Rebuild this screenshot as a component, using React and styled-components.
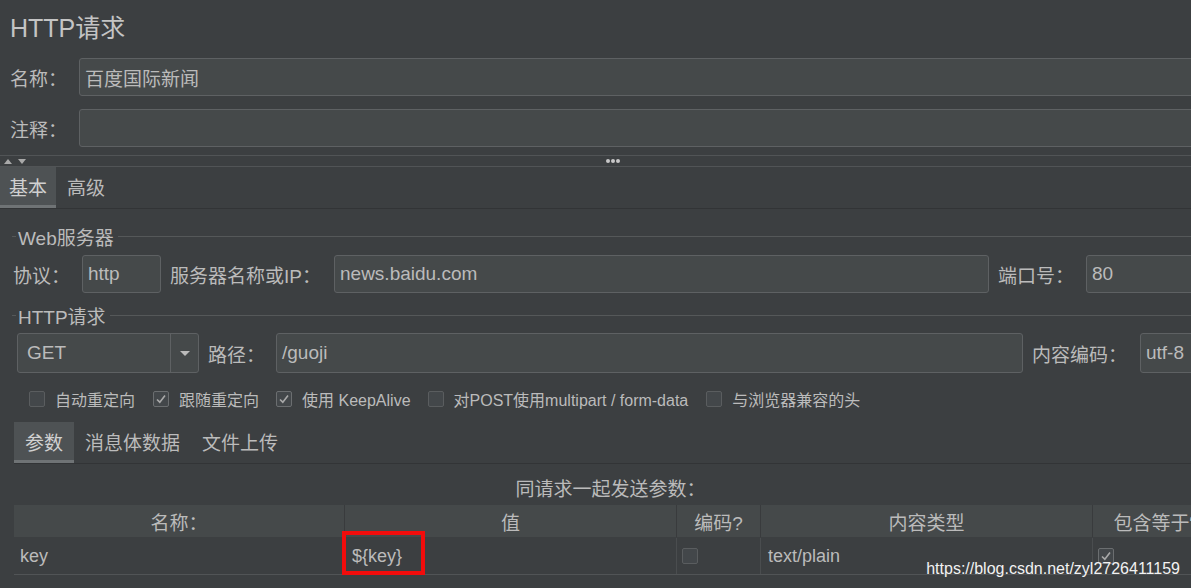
import React from "react";
import styled, { createGlobalStyle } from "styled-components";

const Global = createGlobalStyle`
  html, body {
    margin: 0;
    padding: 0;
    background: #3c3f41;
  }
  * {
    box-sizing: border-box;
  }
`;

const FONT = `"Liberation Sans", "Noto Sans CJK SC", sans-serif`;

const Page = styled.div`
  position: relative;
  width: 1191px;
  height: 588px;
  overflow: hidden;
  background: #3c3f41;
  color: #bbbbbb;
  font-family: ${FONT};
  font-size: 19px;
`;

const Top = styled.div`
  padding-left: 10px;
`;

const Title = styled.div`
  height: 56px;
  line-height: 56px;
  font-size: 25px;
  color: #c4c4c4;
`;

const FieldRow = styled.div`
  display: flex;
  align-items: center;
  margin-top: ${(p) => p.$top || 0}px;
`;

const Label = styled.div`
  flex: none;
  width: ${(p) => p.$w}px;
  white-space: nowrap;
  font-size: 19px;
  padding-left: ${(p) => p.$pl || 0}px;
`;

const Input = styled.div`
  flex: ${(p) => (p.$w ? "none" : "1")};
  width: ${(p) => (p.$w ? `${p.$w}px` : "auto")};
  height: ${(p) => p.$h || 38}px;
  margin-right: ${(p) => (p.$w ? "9px" : "-20px")};
  background: #45494a;
  border: 1px solid #5e6163;
  border-radius: 3px;
  display: flex;
  align-items: center;
  padding-left: 5px;
  font-size: 19px;
  color: #bbbbbb;
  white-space: nowrap;
`;

const Splitter = styled.div`
  position: relative;
  margin-top: 8px;
  height: 12px;
  border-top: 1px solid #515456;
  border-bottom: 1px solid #515456;
  display: flex;
  align-items: center;
  padding-left: 4px;
  gap: 6px;
`;

const Arrow = styled.div`
  width: 0;
  height: 0;
  border-left: 4px solid transparent;
  border-right: 4px solid transparent;
  ${(p) =>
    p.$up
      ? "border-bottom: 5px solid #a9a9a9;"
      : "border-top: 5px solid #a9a9a9;"}
`;

const Dots = styled.div`
  position: absolute;
  left: 606px;
  top: 3px;
  display: flex;
  gap: 1px;
  span {
    width: 4px;
    height: 4px;
    border-radius: 50%;
    background: #c8c8c8;
  }
`;

const TabBar = styled.div`
  display: flex;
  height: 42px;
  border-bottom: 1px solid #323436;
  margin-left: ${(p) => p.$left || 0}px;
  margin-top: ${(p) => p.$top || 0}px;
`;

const Tab = styled.div`
  display: flex;
  align-items: center;
  padding: 0 ${(p) => p.$pad || 10}px;
  font-size: 19px;
  color: ${(p) => (p.$active ? "#d0d0d0" : "#bbbbbb")};
  background: ${(p) => (p.$active ? "#4e5254" : "transparent")};
  border-bottom: 3px solid ${(p) => (p.$active ? "#6f7375" : "transparent")};
`;

const Content = styled.div`
  padding-left: 12px;
`;

const GroupTitle = styled.div`
  display: flex;
  align-items: center;
  height: 24px;
  margin-top: ${(p) => p.$top}px;
  margin-bottom: ${(p) => p.$bottom}px;
  &::before {
    content: "";
    width: 4px;
    border-top: 1px solid #555859;
    margin-right: 2px;
  }
  &::after {
    content: "";
    flex: 1;
    border-top: 1px solid #555859;
    margin-left: 4px;
  }
`;

const Combo = styled.div`
  flex: none;
  width: 182px;
  height: 40px;
  margin-left: 5px;
  margin-right: 9px;
  display: flex;
  background: #45494a;
  border: 1px solid #5e6163;
  border-radius: 3px;
`;

const ComboValue = styled.div`
  flex: 1;
  display: flex;
  align-items: center;
  padding-left: 9px;
  font-size: 19px;
  border-right: 1px solid #5e6163;
`;

const ComboButton = styled.div`
  width: 27px;
  display: flex;
  align-items: center;
  justify-content: center;
  &::after {
    content: "";
    border-left: 5px solid transparent;
    border-right: 5px solid transparent;
    border-top: 5px solid #bbbbbb;
  }
`;

const CheckRow = styled.div`
  display: flex;
  align-items: center;
  height: 20px;
  margin-top: 16px;
  padding-left: 17px;
`;

const CheckItem = styled.div`
  display: flex;
  align-items: center;
  gap: 10px;
  margin-right: ${(p) => p.$mr}px;
  font-size: 16px;
  white-space: nowrap;
`;

const Box = styled.div`
  flex: none;
  width: 16px;
  height: 16px;
  border: 1px solid ${(p) => (p.$checked ? "#6b6e70" : "#5a5d5f")};
  border-radius: 2px;
  background: #43474a;
  display: flex;
  align-items: center;
  justify-content: center;
`;

const Check = ({ checked }) => (
  <Box $checked={checked}>
    {checked && (
      <svg width="12" height="12" viewBox="0 0 12 12">
        <path d="M2 6.5 L4.8 9.2 L10 2.5" fill="none" stroke="#a9a9a9" strokeWidth="1.6" />
      </svg>
    )}
  </Box>
);

const Caption = styled.div`
  height: 41px;
  display: flex;
  align-items: center;
  justify-content: center;
  padding-top: 5px;
  padding-left: 18px;
  font-size: 19px;
`;

const Table = styled.div`
  margin-left: 2px;
  width: 1400px;
`;

const Tr = styled.div`
  display: flex;
  height: ${(p) => p.$h}px;
  background: ${(p) => (p.$head ? "#45494a" : "#3c3f41")};
  border-bottom: 1px solid ${(p) => (p.$head ? "#3c3f41" : "#515456")};
`;

const Td = styled.div`
  position: relative;
  flex: none;
  width: ${(p) => p.$w}px;
  display: flex;
  align-items: center;
  justify-content: ${(p) => (p.$head ? "center" : "flex-start")};
  padding-left: ${(p) => (p.$head ? 0 : p.$pl ?? 6)}px;
  border-right: 1px solid ${(p) => (p.$head ? "#393b3d" : "#4a4d4f")};
  font-size: ${(p) => (p.$head ? 19 : 18)}px;
  white-space: nowrap;
  &:last-child {
    border-right: none;
  }
`;

const Highlight = styled.div`
  position: absolute;
  left: -3px;
  top: -7px;
  width: 83px;
  height: 44px;
  border: 4px solid #f20c0c;
`;

const Watermark = styled.div`
  position: absolute;
  right: 11px;
  bottom: 10px;
  font-family: ${FONT};
  font-size: 16px;
  color: #f2f2f2;
`;

const cols = [331, 332, 84, 332, 160];

export default function App() {
  return (
    <Page>
      <Global />
      <Top>
        <Title>HTTP请求</Title>
        <FieldRow $top={2}>
          <Label $w={69}>名称：</Label>
          <Input>百度国际新闻</Input>
        </FieldRow>
        <FieldRow $top={13}>
          <Label $w={69}>注释：</Label>
          <Input />
        </FieldRow>
      </Top>
      <Splitter>
        <Arrow $up />
        <Arrow />
        <Dots>
          <span />
          <span />
          <span />
        </Dots>
      </Splitter>
      <TabBar>
        <Tab $active $pad={9}>基本</Tab>
        <Tab $pad={11}>高级</Tab>
      </TabBar>
      <Content>
        <GroupTitle $top={15} $bottom={7}>Web服务器</GroupTitle>
        <FieldRow>
          <Label $w={70} $pl={1}>协议：</Label>
          <Input $w={79}>http</Input>
          <Label $w={164}>服务器名称或IP：</Label>
          <Input $w={655}>news.baidu.com</Input>
          <Label $w={88}>端口号：</Label>
          <Input>80</Input>
        </FieldRow>
        <GroupTitle $top={10} $bottom={6}>HTTP请求</GroupTitle>
        <FieldRow>
          <Combo>
            <ComboValue>GET</ComboValue>
            <ComboButton />
          </Combo>
          <Label $w={68}>路径：</Label>
          <Input $w={747} $h={40}>/guoji</Input>
          <Label $w={108}>内容编码：</Label>
          <Input $h={40}>utf-8</Input>
        </FieldRow>
        <CheckRow>
          <CheckItem $mr={18}>
            <Check />
            自动重定向
          </CheckItem>
          <CheckItem $mr={17}>
            <Check checked />
            跟随重定向
          </CheckItem>
          <CheckItem $mr={17}>
            <Check checked />
            使用 KeepAlive
          </CheckItem>
          <CheckItem $mr={18}>
            <Check />
            对POST使用multipart / form-data
          </CheckItem>
          <CheckItem $mr={0}>
            <Check />
            与浏览器兼容的头
          </CheckItem>
        </CheckRow>
      </Content>
      <Content>
        <TabBar $left={2} $top={13}>
          <Tab $active $pad={11}>参数</Tab>
          <Tab $pad={11}>消息体数据</Tab>
          <Tab $pad={11}>文件上传</Tab>
        </TabBar>
        <Caption>同请求一起发送参数：</Caption>
        <Table>
          <Tr $head $h={33}>
            <Td $head $w={cols[0]}>名称：</Td>
            <Td $head $w={cols[1]}>值</Td>
            <Td $head $w={cols[2]}>编码?</Td>
            <Td $head $w={cols[3]}>内容类型</Td>
            <Td $head $w={cols[4]}>包含等于“=”？</Td>
          </Tr>
          <Tr $h={37}>
            <Td $w={cols[0]}>key</Td>
            <Td $w={cols[1]} $pl={7}>
              ${"{key}"}
              <Highlight />
            </Td>
            <Td $w={cols[2]} $pl={5}>
              <Check />
            </Td>
            <Td $w={cols[3]} $pl={7}>text/plain</Td>
            <Td $w={cols[4]} $pl={5}>
              <Check checked />
            </Td>
          </Tr>
        </Table>
      </Content>
      <Watermark>https://blog.csdn.net/zyl2726411159</Watermark>
    </Page>
  );
}
